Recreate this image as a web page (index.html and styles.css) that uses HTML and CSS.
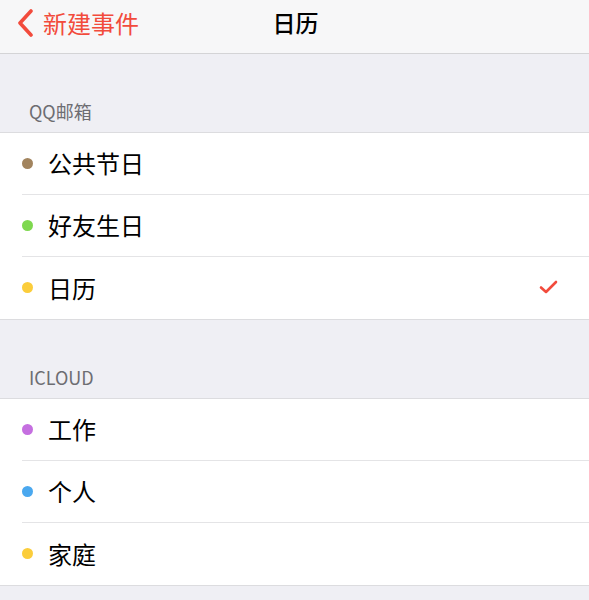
FILE: index.html
```html
<!DOCTYPE html>
<html lang="zh-CN">
<head>
    <meta charset="UTF-8">
    <meta name="viewport" content="width=device-width, initial-scale=1.0">
    <title>日历</title>
    <link rel="stylesheet" href="styles.css">
</head>
<body>

    <div class="navbar">
        <a class="back" href="#">
            <svg class="chevron" width="18" height="28" viewBox="0 0 18 28">
                <path d="M15 2 L4 14 L15 26" fill="none" stroke="#f24b3c" stroke-width="3.6" stroke-linecap="round" stroke-linejoin="round"/>
            </svg>
            <span>新建事件</span>
        </a>
        <div class="title">日历</div>
    </div>

    <div class="section-header">QQ邮箱</div>
    <ul class="group">
        <li class="row"><span class="dot" style="background:#a2845e"></span><span class="label">公共节日</span></li>
        <li class="row"><span class="dot" style="background:#7ed84f"></span><span class="label">好友生日</span></li>
        <li class="row">
            <span class="dot" style="background:#fbcd3b"></span><span class="label">日历</span>
            <svg class="check" width="20" height="16" viewBox="0 0 20 16">
                <path d="M2 8.5 L7 13 L17 3" fill="none" stroke="#f24b3c" stroke-width="2.6" stroke-linecap="round" stroke-linejoin="round"/>
            </svg>
        </li>
    </ul>

    <div class="section-header">ICLOUD</div>
    <ul class="group">
        <li class="row"><span class="dot" style="background:#c56fe0"></span><span class="label">工作</span></li>
        <li class="row"><span class="dot" style="background:#4aa8ef"></span><span class="label">个人</span></li>
        <li class="row"><span class="dot" style="background:#fbcd3b"></span><span class="label">家庭</span></li>
    </ul>

</body>
</html>
```

FILE: styles.css
```css
body {
    font-family: "Noto Sans CJK SC", "Noto Sans", sans-serif;
    background-color: #efeff4;
    margin: 0;
    padding: 0;
}

.navbar {
    position: relative;
    height: 53px;
    background-color: #f7f7f8;
    border-bottom: 1px solid #d4d4d6;
    display: flex;
    align-items: center;
    justify-content: center;
}

.back {
    position: absolute;
    left: 16px;
    top: 0;
    height: 44px;
    display: flex;
    align-items: center;
    gap: 9px;
    color: #f24b3c;
    text-decoration: none;
    font-size: 24px;
}

.chevron {
    margin-top: 2px;
}

.title {
    font-size: 23px;
    font-weight: 500;
    color: #000;
    margin-top: -9px;
    margin-left: 2px;
}

.section-header {
    height: 78px;
    padding-left: 29px;
    box-sizing: border-box;
    display: flex;
    align-items: flex-end;
    padding-bottom: 8px;
    font-size: 18px;
    color: #6d6d72;
}

.group {
    list-style: none;
    margin: 0;
    padding: 0;
    background-color: #fff;
    border-top: 1px solid #dcdcdf;
    border-bottom: 1px solid #dcdcdf;
}

.row {
    height: 61px;
    margin-left: 22px;
    padding-right: 30px;
    display: flex;
    align-items: center;
    border-bottom: 1px solid #e4e4e6;
}

.row:last-child {
    height: 62px;
    border-bottom: none;
}

.dot {
    width: 11px;
    height: 11px;
    border-radius: 50%;
    margin-right: 16px;
    margin-top: -1px;
}

.label {
    font-size: 24px;
    color: #000;
    flex: 1;
    margin-left: -1px;
    margin-top: -2px;
}

.check {
    margin-top: -2px;
}
```
